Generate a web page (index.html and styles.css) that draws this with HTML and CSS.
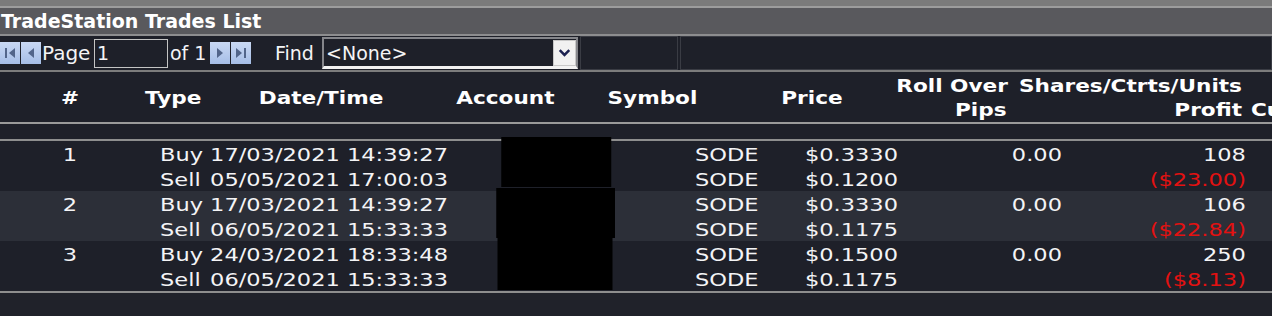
FILE: index.html
```html
<!DOCTYPE html>
<html>
<head>
<meta charset="utf-8">
<title>TradeStation Trades List</title>
<link rel="stylesheet" href="styles.css">
</head>
<body>
<div class="app">
  <div class="topstrip"></div>
  <div class="titlebar">TradeStation Trades List</div>
  <div class="toolbar">
    <div class="navgrp">
      <span class="navbtn"><svg width="20" height="22" viewBox="0 0 20 22"><rect x="5" y="6" width="2" height="10"/><polygon points="15,6 9,11 15,16"/></svg></span>
      <span class="navbtn"><svg width="20" height="22" viewBox="0 0 20 22"><polygon points="13,6 7,11 13,16"/></svg></span>
    </div>
    <span class="lbl lbl-page">Page</span>
    <div class="pagebox">1</div>
    <span class="lbl lbl-of">of 1</span>
    <div class="navgrp">
      <span class="navbtn"><svg width="20" height="22" viewBox="0 0 20 22"><polygon points="7,6 13,11 7,16"/></svg></span>
      <span class="navbtn"><svg width="20" height="22" viewBox="0 0 20 22"><polygon points="5,6 11,11 5,16"/><rect x="13" y="6" width="2" height="10"/></svg></span>
    </div>
    <span class="lbl lbl-find">Find</span>
    <div class="select">
      <span class="selval">&lt;None&gt;</span>
      <span class="selbtn"><svg width="22" height="26" viewBox="0 0 22 26"><path d="M6 10 L11 15 L16 10" fill="none" stroke="#1b2150" stroke-width="2.6"/></svg></span>
    </div>
    <div class="box box1"></div>
    <div class="box box2"></div>
  </div>
  <div class="tablewrap">
    <div class="table">
      <div class="thead">
        <div class="h h-num">#</div>
        <div class="h h-type">Type</div>
        <div class="h h-date">Date/Time</div>
        <div class="h h-acct">Account</div>
        <div class="h h-sym">Symbol</div>
        <div class="h h-price">Price</div>
        <div class="h h-roll"><div>Roll Over</div><div class="pips">Pips</div></div>
        <div class="h h-shares"><div>Shares/Ctrts/Units</div><div>Profit</div></div>
        <div class="h h-cu"><div>&nbsp;</div><div class="cu">Cu</div></div>
      </div>
      <div class="gap"></div>
      <div class="tbody">
        <div class="trow">
          <div class="c c-num"><div>1</div><div></div></div>
          <div class="c c-type"><div>Buy</div><div>Sell</div></div>
          <div class="c c-date"><div>17/03/2021 14:39:27</div><div>05/05/2021 17:00:03</div></div>
          <div class="c c-acct"></div>
          <div class="c c-sym"><div>SODE</div><div>SODE</div></div>
          <div class="c c-price"><div>$0.3330</div><div>$0.1200</div></div>
          <div class="c c-pips"><div>0.00</div><div></div></div>
          <div class="c c-qty"><div>108</div><div class="loss">($23.00)</div></div>
          <div class="redact r1"></div>
        </div>
        <div class="trow alt">
          <div class="c c-num"><div>2</div><div></div></div>
          <div class="c c-type"><div>Buy</div><div>Sell</div></div>
          <div class="c c-date"><div>17/03/2021 14:39:27</div><div>06/05/2021 15:33:33</div></div>
          <div class="c c-acct"></div>
          <div class="c c-sym"><div>SODE</div><div>SODE</div></div>
          <div class="c c-price"><div>$0.3330</div><div>$0.1175</div></div>
          <div class="c c-pips"><div>0.00</div><div></div></div>
          <div class="c c-qty"><div>106</div><div class="loss">($22.84)</div></div>
          <div class="redact r2"></div>
        </div>
        <div class="trow">
          <div class="c c-num"><div>3</div><div></div></div>
          <div class="c c-type"><div>Buy</div><div>Sell</div></div>
          <div class="c c-date"><div>24/03/2021 18:33:48</div><div>06/05/2021 15:33:33</div></div>
          <div class="c c-acct"></div>
          <div class="c c-sym"><div>SODE</div><div>SODE</div></div>
          <div class="c c-price"><div>$0.1500</div><div>$0.1175</div></div>
          <div class="c c-pips"><div>0.00</div><div></div></div>
          <div class="c c-qty"><div>250</div><div class="loss">($8.13)</div></div>
          <div class="redact r3"></div>
        </div>
      </div>
    </div>
  </div>
</div>
</body>
</html>
```
FILE: styles.css
```css
* { box-sizing: border-box; margin: 0; padding: 0; }
html, body { width: 1272px; height: 316px; overflow: hidden; background: #20222a; }
body { font-family: "DejaVu Sans", Verdana, sans-serif; color: #f4f4f6; }

.topstrip { height: 8px; background: #7b7b7b; border-bottom: 2px solid #9d9d9d; }
.titlebar {
  height: 28px; background: #59595d; border-bottom: 2px solid #8d8d8f;
  font-weight: bold; font-size: 19px; line-height: 26px; padding-left: 1px; color: #fff;
  white-space: nowrap;
}

.toolbar {
  height: 36px; display: flex; align-items: center; background: #1e2029;
  border-bottom: 2px solid #7c7c7c; font-size: 19px; white-space: nowrap;
}
.navgrp { display: flex; gap: 1px; width: 41px; flex: none; }
.navbtn {
  width: 20px; height: 22px; display: block;
  background: linear-gradient(#c9d8f3, #a6bee7);
}
.navbtn svg { display: block; fill: #52658a; }
.lbl { flex: none; line-height: 34px; }
.lbl-page { margin-left: 1px; width: 52px; font-size: 20px; }
.lbl-of { margin-left: 2px; width: 40px; }
.lbl-find { margin-left: 24px; width: 47px; }
.pagebox {
  flex: none; width: 74px; height: 29px; border: 1px solid #c4c4c4;
  padding-left: 2px; line-height: 26px;
}
.select {
  flex: none; width: 256px; height: 32px; display: flex; align-items: center;
  border: 2px solid #85868b; border-bottom: 3px solid #f2f2f2; background: #1e2029;
}
.selval { flex: 1; padding-left: 2px; line-height: 26px; }
.selbtn {
  width: 23px; height: 26px; background: #f1f1f1; border: 1px solid #c8c8c8;
  display: flex; align-items: center; justify-content: center;
}
.selbtn svg { display: block; }
.box { height: 34px; border: 1px solid #3a3c44; background: #1e2029; }
.box1 { flex: none; width: 98px; margin-left: 2px; }
.box2 { flex: 1; margin-left: 2px; }

.tablewrap { overflow: hidden; width: 1272px; }
.table {
  width: 1017.6px; overflow: hidden; font-size: 18px;
  transform: scaleX(1.25); transform-origin: 0 0;
}

.thead {
  display: flex; align-items: center; height: 52px; padding-top: 2px;
  border-bottom: 2px solid #9a9a9a; background: #1e2029;
  font-weight: bold; font-size: 17.3px; line-height: 24px; color: #fff; white-space: nowrap;
}
.h { flex: none; }
.h-num { width: 112px; text-align: center; }
.h-type { width: 95px; padding-left: 4px; }
.h-date { width: 158px; }
.h-acct { width: 121px; }
.h-sym { width: 139px; }
.h-price { width: 92px; }
.h-roll { width: 90.6px; }
.h-roll .pips { padding-left: 47px; }
.h-shares { width: 186px; text-align: right; }
.h-cu { width: 24px; }
.h-cu .cu { padding-left: 7.2px; }

.gap { height: 17px; background: #1e2029; border-bottom: 2px solid #8e8e8e; }

.tbody { border-bottom: 2px solid #8e8e8e; }
.trow {
  position: relative; display: flex; height: 50px; padding-top: 1px;
  line-height: 25px; background: #1e2029; white-space: nowrap;
}
.trow.alt { background: #2c2f38; }
.c { flex: none; }
.c > div { height: 25px; }
.c-num { width: 112px; text-align: center; }
.c-type { width: 56px; padding-left: 16px; }
.c-date { width: 190.4px; text-align: right; }
.c-acct { width: 197.6px; }
.c-sym { width: 80px; }
.c-price { width: 82.4px; text-align: right; }
.c-pips { width: 131.2px; text-align: right; }
.c-qty { width: 147.2px; text-align: right; }
.loss { color: #e41111; }

.redact { position: absolute; background: #000; }
.r1 { left: 401.4px; width: 88px; top: -4px; height: 50px; }
.r2 { left: 396.8px; width: 95.2px; top: -3px; height: 50px; }
.r3 { left: 397.6px; width: 92.8px; top: -3px; height: 52px; }
```
